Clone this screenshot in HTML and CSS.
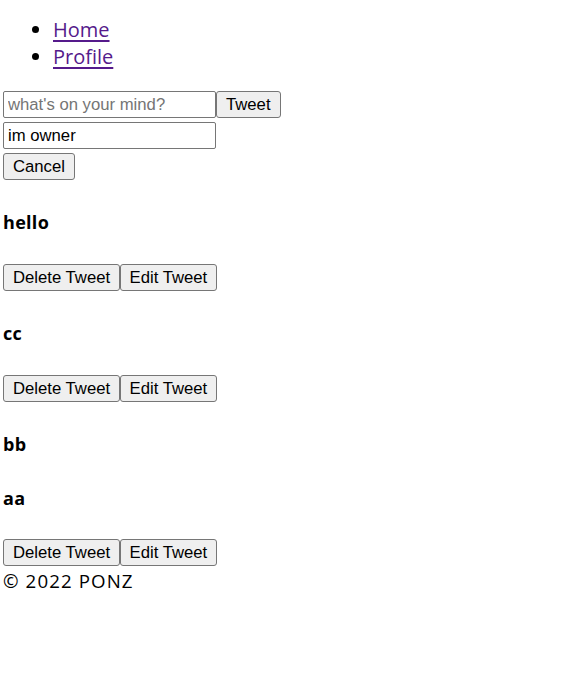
FILE: index.html
```html
<!DOCTYPE html>
<html lang="ko">
<head>
<meta charset="utf-8">
<title>Nwitter</title>
<link rel="stylesheet" href="styles.css">
</head>
<body>
<div class="app">
  <nav class="nav">
    <ul class="nav-list">
      <li><a class="nav-link" href="#">Home</a></li>
      <li><a class="nav-link" href="#">Profile</a></li>
    </ul>
  </nav>
  <form class="compose">
    <input class="field" type="text" placeholder="what's on your mind?"><button class="btn" type="button">Tweet</button>
  </form>
  <form class="edit">
    <input class="field" type="text" value="im owner">
    <div class="edit-actions"><button class="btn" type="button">Cancel</button></div>
  </form>
  <div class="tweets">
    <div class="tweet">
      <h4 class="tweet-text">hello</h4>
      <div class="tweet-actions"><button class="btn" type="button">Delete Tweet</button><button class="btn btn-edit" type="button">Edit Tweet</button></div>
    </div>
    <div class="tweet">
      <h4 class="tweet-text">cc</h4>
      <div class="tweet-actions"><button class="btn" type="button">Delete Tweet</button><button class="btn btn-edit" type="button">Edit Tweet</button></div>
    </div>
    <div class="tweet">
      <h4 class="tweet-text">bb</h4>
    </div>
    <div class="tweet tweet-last">
      <h4 class="tweet-text">aa</h4>
      <div class="tweet-actions"><button class="btn" type="button">Delete Tweet</button><button class="btn btn-edit" type="button">Edit Tweet</button></div>
    </div>
  </div>
  <footer class="footer">&copy; 2022 PONZ</footer>
</div>
</body>
</html>
```
FILE: styles.css
```css
html, body {
  background: #ffffff;
}
body {
  margin: 0 3px;
  font-family: "Open Sans", "Noto Sans CJK KR", sans-serif;
  color: #000000;
}
.nav-list {
  margin: 16px 0 21px;
  padding-left: 50px;
  font-size: 20px;
  line-height: 27px;
}
.nav-link {
  color: #551a8b;
  text-decoration: underline;
  text-underline-offset: 3px;
}
.compose {
  display: flex;
  margin: 0;
}
.field {
  box-sizing: border-box;
  width: 213px;
  height: 27px;
  margin: 0;
  padding: 0 4px;
  border: 1px solid #767676;
  border-radius: 2px;
  font-family: "Liberation Sans", Arial, sans-serif;
  font-size: 16.7px;
  color: #000000;
  background: #ffffff;
}
.field::placeholder {
  color: #757575;
}
.btn {
  box-sizing: border-box;
  height: 27px;
  margin: 0;
  padding: 0 9px;
  border: 1px solid #767676;
  border-radius: 3px;
  background: #efefef;
  font-family: "Liberation Sans", Arial, sans-serif;
  font-size: 16.7px;
  color: #000000;
}
.btn-edit {
  padding: 0 8.5px;
}
.edit {
  display: flex;
  flex-direction: column;
  align-items: flex-start;
  gap: 4px;
  margin: 4px 0 0;
}
.edit-actions {
  display: flex;
}
.tweet-text {
  margin: 30px 0;
  font-size: 18px;
  line-height: 24px;
  font-weight: 700;
  letter-spacing: 0.3px;
}
.tweet-last .tweet-text {
  margin-bottom: 29px;
}
.tweet-actions {
  display: flex;
}
.footer {
  font-size: 18.7px;
  line-height: 30px;
  letter-spacing: 1.1px;
}
```
